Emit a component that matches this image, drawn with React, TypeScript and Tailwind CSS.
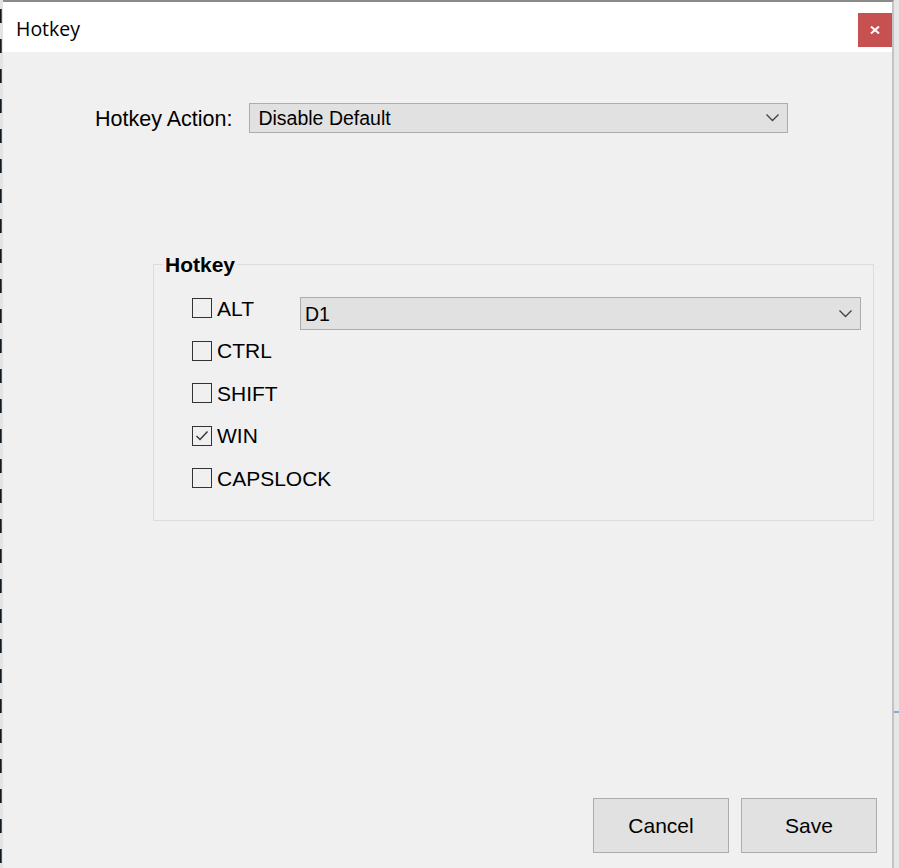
import React from 'react';

const font = { fontFamily: '"Liberation Sans", Arial, sans-serif' };

function Chevron() {
  return (
    <svg width="13" height="8" viewBox="0 0 13 8" className="shrink-0">
      <polyline points="0.5,0.5 6.5,6.5 12.5,0.5" fill="none" stroke="#404040" strokeWidth="1.3" />
    </svg>
  );
}

function Select({ value, className }: { value: string; className: string }) {
  return (
    <div className={`flex items-center justify-between bg-[#e1e1e1] border border-[#adadad] pr-2 ${className}`}>
      <span className="text-[19.5px] text-black leading-none pt-[2px]">{value}</span>
      <Chevron />
    </div>
  );
}

function Check({ label, checked }: { label: string; checked?: boolean }) {
  return (
    <div className="flex items-center h-[20px]">
      <div className="w-[20px] h-[20px] shrink-0 border border-[#333] bg-[#f0f0f0] flex items-center justify-center">
        {checked && (
          <svg width="16" height="16" viewBox="0 0 16 16">
            <polyline points="2.5,8 6,11.5 13.5,3.5" fill="none" stroke="#333" strokeWidth="1.4" />
          </svg>
        )}
      </div>
      <span className="ml-[5px] text-[21px] leading-none text-black whitespace-nowrap">{label}</span>
    </div>
  );
}

export default function App() {
  const dashes = Array.from({ length: 29 }, (_, i) => i);
  return (
    <div className="flex w-[899px] h-[868px] overflow-hidden bg-[#f0f0f0]" style={font}>
      <div className="w-[3px] bg-[#e3e3e3] flex flex-col gap-[16px] pt-[9px] items-start">
        {dashes.map((i) => (
          <div key={i} className="w-[2px] h-[14px] shrink-0 bg-[#101820] border-r border-[#1060c0]" />
        ))}
      </div>

      <div className="flex-1 flex flex-col border-t-2 border-[#8a8a8a] border-r-2 border-r-[#c4c4c4]">
        <div className="h-[50px] bg-white flex items-start justify-between pl-[13px]">
          <span
            className="mt-[17px] text-black leading-none"
            style={{ fontFamily: '"Open Sans", "Noto Sans", sans-serif', fontSize: '19.5px' }}
          >
            Hotkey
          </span>
          <div className="mt-[11px] w-[34px] h-[34px] bg-[#c75050] flex items-center justify-center">
            <svg width="10" height="8" viewBox="0 0 10 8">
              <path d="M1 0.5 L9 7.5 M9 0.5 L1 7.5" stroke="white" strokeWidth="2" />
            </svg>
          </div>
        </div>

        <div className="flex-1 flex flex-col">
          <div className="flex items-center pl-[92px] mt-[51px]">
            <span className="text-[21.5px] leading-none text-black pt-[3px]">Hotkey Action:</span>
            <Select value="Disable Default" className="ml-[17px] w-[539px] h-[30px] pl-[8px]" />
          </div>

          <fieldset className="ml-[150px] mt-[121px] w-[721px] h-[267px] border border-[#dcdcdc] pl-[38px] pt-[23px]">
            <legend className="ml-[-29px] px-[2px] text-[21px] font-bold leading-none text-black">Hotkey</legend>
            <div className="flex">
              <div className="flex flex-col gap-[22.5px] w-[108px]">
                <Check label="ALT" />
                <Check label="CTRL" />
                <Check label="SHIFT" />
                <Check label="WIN" checked />
                <Check label="CAPSLOCK" />
              </div>
              <Select value="D1" className="mt-[-1px] w-[561px] h-[33px] pl-[4px]" />
            </div>
          </fieldset>

          <div className="mt-auto flex justify-end gap-[12px] pr-[15px] pb-[15px]">
            <div className="w-[136px] h-[55px] bg-[#e1e1e1] border border-[#adadad] flex items-center justify-center text-[21px] text-black">
              Cancel
            </div>
            <div className="w-[136px] h-[55px] bg-[#e1e1e1] border border-[#adadad] flex items-center justify-center text-[21px] text-black">
              Save
            </div>
          </div>
        </div>
      </div>

      <div className="w-[5px] bg-[#e6e6e6] flex flex-col">
        <div className="h-[711px]" />
        <div className="h-[2px] bg-[#8aa8d8]" />
      </div>
    </div>
  );
}
